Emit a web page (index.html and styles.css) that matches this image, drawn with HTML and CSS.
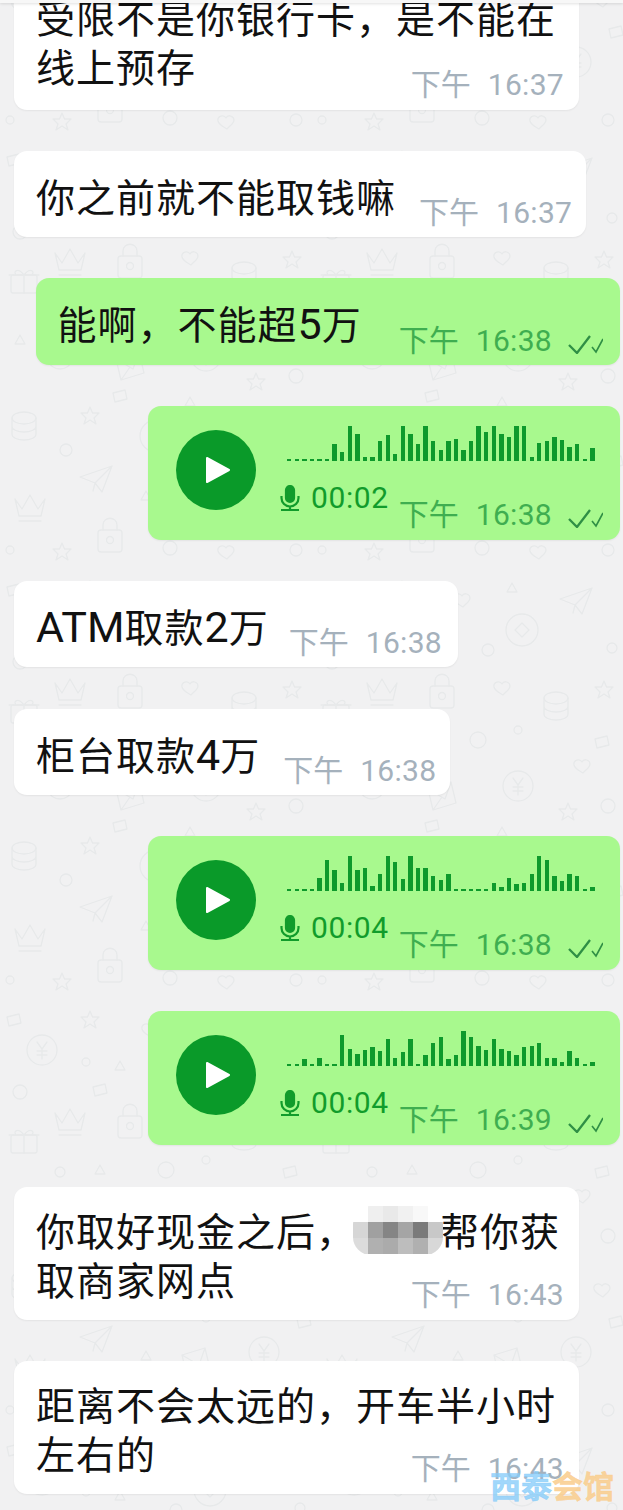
FILE: index.html
```html
<!DOCTYPE html>
<html lang="zh-CN">
<head>
  <meta charset="UTF-8">
  <meta name="viewport" content="width=device-width, initial-scale=1.0">
  <title>聊天记录</title>
  <link rel="stylesheet" href="styles.css">
</head>
<body>
  <div class="chat">
    <!-- background doodles -->
    <svg class="doodles" width="623" height="1510" aria-hidden="true">
      <defs>
        <path id="heart" d="M0 -4C-2 -8 -9 -6 -8 -1C-7 3 -2 5 1 7C3 4 8 2 8 -2C8 -6 2 -8 0 -4Z"/>
        <path id="star" d="M0 -9L2.5 -3L9 -3L4 2L6 8L0 4L-6 8L-4 2L-9 -3L-2.5 -3Z"/>
        <path id="tri" d="M0 -5L5 4L-5 4Z"/>
        <path id="chip" d="M-7 -3L5 -6L7 3L-5 6Z"/>
        <g id="coin"><circle r="15"/><path d="M-5 -8L0 -1L5 -8M0 -1V9M-5 1H5M-5 5H5"/></g>
        <g id="ring"><circle r="16"/><path d="M0 -7L7 0L0 7L-7 0Z"/></g>
        <g id="crown"><path d="M-15 -7L-8 3L0 -11L8 3L15 -7L11 10H-11ZM-11 15H11"/></g>
        <g id="lock"><rect x="-12" y="-6" width="24" height="22" rx="3"/><path d="M-7 -6V-11C-7 -20 7 -20 7 -11V-6"/><circle cy="4" r="3.5"/></g>
        <g id="gift"><rect x="-13" y="-5" width="26" height="18" rx="2"/><path d="M-15 -5H15M0 -5V13M0 -5C-7 -14 -12 -7 -7 -5M0 -5C7 -14 12 -7 7 -5"/></g>
        <g id="mail"><path d="M-14 -7L9 -14L14 7L-9 14ZM-14 -7L3 3L9 -14M-9 14L0 1"/></g>
        <g id="plane"><path d="M-16 -3L16 -14L6 12L-1 3ZM-1 3L16 -14M-1 3L-3 11"/></g>
        <g id="stack"><ellipse cy="-8" rx="12" ry="6"/><path d="M-12 -8V8C-12 16 12 16 12 8V-8M-12 0C-12 8 12 8 12 0"/></g>
        <g id="bag"><path d="M-5 -14L5 -14L3 -8C19 0 12 15 0 15C-12 15 -19 0 -3 -8Z"/><path d="M-4 -2L0 2L4 -2M0 2V10M-4 5H4"/></g>
      </defs>
      <pattern id="tile" width="312" height="430" patternUnits="userSpaceOnUse" x="0" y="140">
        <g fill="none" stroke="#e7e9ea" stroke-width="1.3" stroke-linejoin="round" stroke-linecap="round">
          <use href="#coin" x="42" y="50"/>
          <use href="#star" x="90" y="20"/>
          <use href="#heart" x="150" y="30"/>
          <use href="#ring" x="210" y="60"/>
          <use href="#plane" x="264" y="32"/>
          <use href="#tri" x="120" y="66"/>
          <use href="#chip" x="14" y="20"/>
          <use href="#tri" x="200" y="18"/>
          <circle cx="20" cy="92" r="7"/>
          <circle cx="176" cy="80" r="6"/>
          <circle cx="300" cy="78" r="5"/>
          <circle cx="86" cy="62" r="4"/>
          <use href="#crown" x="70" y="120"/>
          <use href="#lock" x="130" y="122"/>
          <use href="#gift" x="24" y="140"/>
          <use href="#heart" x="190" y="118"/>
          <use href="#stack" x="244" y="136"/>
          <use href="#star" x="292" y="120"/>
          <use href="#chip" x="100" y="90"/>
          <use href="#tri" x="100" y="170"/>
          <circle cx="166" cy="170" r="8"/>
          <circle cx="206" cy="160" r="4"/>
          <circle cx="60" cy="172" r="5"/>
          <use href="#chip" x="290" y="172"/>
          <use href="#bag" x="60" y="214"/>
          <use href="#mail" x="130" y="226"/>
          <use href="#coin" x="206" y="216"/>
          <use href="#heart" x="270" y="196"/>
          <circle cx="296" cy="236" r="7"/>
          <use href="#tri" x="20" y="200"/>
          <use href="#star" x="256" y="242"/>
          <use href="#stack" x="24" y="286"/>
          <use href="#star" x="90" y="276"/>
          <use href="#ring" x="156" y="296"/>
          <use href="#gift" x="232" y="282"/>
          <use href="#heart" x="290" y="290"/>
          <use href="#tri" x="190" y="262"/>
          <use href="#chip" x="120" y="256"/>
          <circle cx="66" cy="310" r="6"/>
          <circle cx="206" cy="318" r="4"/>
          <use href="#plane" x="96" y="340"/>
          <use href="#coin" x="264" y="352"/>
          <use href="#crown" x="30" y="366"/>
          <use href="#mail" x="196" y="362"/>
          <use href="#tri" x="146" y="356"/>
          <use href="#chip" x="304" y="322"/>
          <use href="#lock" x="110" y="396"/>
          <circle cx="170" cy="408" r="7"/>
          <use href="#heart" x="226" y="412"/>
          <use href="#star" x="62" y="412"/>
          <circle cx="296" cy="410" r="6"/>
          <circle cx="10" cy="410" r="4"/>
        </g>
      </pattern>
      <rect width="623" height="1510" fill="url(#tile)"/>
    </svg>

    <div class="topbar"></div>

    <div class="messages">
      <div class="bubble in wrap first">
        <div class="text">受限不是你银行卡，是不能在<br>线上预存</div>
        <div class="meta"><span>下午</span><span class="clock">16:37</span></div>
      </div>

      <div class="bubble in">
        <div class="text">你之前就不能取钱嘛</div>
        <div class="meta"><span>下午</span><span class="clock">16:37</span></div>
      </div>

      <div class="bubble out">
        <div class="text">能啊，不能超<span class="latin">5</span>万</div>
        <div class="meta"><span>下午</span><span class="clock">16:38</span>
          <svg class="ticks" viewBox="0 0 35 20"><path class="tick-big" d="M1 11L9 19L22 2"/><path d="M24 13L28 18L35 5"/></svg>
        </div>
      </div>

      <div class="bubble out voice">
        <div class="play"><svg viewBox="0 0 26 28"><path d="M2 2L24 14L2 26Z"/></svg></div>
        <div class="voice-body">
          <div class="wave" data-bars="2 2 2 2 2 2 17 9 35 27 4 4 20 26 7 35 27 17 35 20 11 20 22 11 20 35 29 35 27 24 35 35 4 18 20 24 21 14 17 2 13"></div>
          <div class="voice-row">
            <div class="duration">
              <svg class="mic" viewBox="0 0 20 26"><path class="mic-head" d="M6 5a4 4 0 0 1 8 0v8a4 4 0 0 1-8 0Z"/><path d="M1.5 11v2a8.5 8.5 0 0 0 17 0v-2M10 21.5V24M1 25h18"/></svg>
              <span>00:02</span>
            </div>
            <div class="meta"><span>下午</span><span class="clock">16:38</span>
              <svg class="ticks" viewBox="0 0 35 20"><path class="tick-big" d="M1 11L9 19L22 2"/><path d="M24 13L28 18L35 5"/></svg>
            </div>
          </div>
        </div>
      </div>

      <div class="bubble in atm">
        <div class="text"><span class="latin">ATM</span>取款<span class="latin">2</span>万</div>
        <div class="meta"><span>下午</span><span class="clock">16:38</span></div>
      </div>

      <div class="bubble in gap-wide">
        <div class="text">柜台取款<span class="latin">4</span>万</div>
        <div class="meta"><span>下午</span><span class="clock">16:38</span></div>
      </div>

      <div class="bubble out voice">
        <div class="play"><svg viewBox="0 0 26 28"><path d="M2 2L24 14L2 26Z"/></svg></div>
        <div class="voice-body">
          <div class="wave" data-bars="2 2 2 2 13 31 21 8 35 21 23 5 17 35 29 12 35 23 23 15 11 17 2 2 2 2 2 8 4 13 7 8 17 35 31 15 10 17 15 2 4"></div>
          <div class="voice-row">
            <div class="duration">
              <svg class="mic" viewBox="0 0 20 26"><path class="mic-head" d="M6 5a4 4 0 0 1 8 0v8a4 4 0 0 1-8 0Z"/><path d="M1.5 11v2a8.5 8.5 0 0 0 17 0v-2M10 21.5V24M1 25h18"/></svg>
              <span>00:04</span>
            </div>
            <div class="meta"><span>下午</span><span class="clock">16:38</span>
              <svg class="ticks" viewBox="0 0 35 20"><path class="tick-big" d="M1 11L9 19L22 2"/><path d="M24 13L28 18L35 5"/></svg>
            </div>
          </div>
        </div>
      </div>

      <div class="bubble out voice">
        <div class="play"><svg viewBox="0 0 26 28"><path d="M2 2L24 14L2 26Z"/></svg></div>
        <div class="voice-body">
          <div class="wave" data-bars="2 2 7 2 8 2 2 31 17 12 16 19 15 27 8 14 27 2 11 23 29 7 11 35 29 20 16 27 17 15 11 19 20 23 8 8 4 15 8 2 4"></div>
          <div class="voice-row">
            <div class="duration">
              <svg class="mic" viewBox="0 0 20 26"><path class="mic-head" d="M6 5a4 4 0 0 1 8 0v8a4 4 0 0 1-8 0Z"/><path d="M1.5 11v2a8.5 8.5 0 0 0 17 0v-2M10 21.5V24M1 25h18"/></svg>
              <span>00:04</span>
            </div>
            <div class="meta"><span>下午</span><span class="clock">16:39</span>
              <svg class="ticks" viewBox="0 0 35 20"><path class="tick-big" d="M1 11L9 19L22 2"/><path d="M24 13L28 18L35 5"/></svg>
            </div>
          </div>
        </div>
      </div>

      <div class="bubble in wrap gap-wide">
        <div class="text tight">你取好现金之后，<span class="mosaic" id="mosaic"></span>帮你获<br>取商家网点</div>
        <div class="meta"><span>下午</span><span class="clock">16:43</span></div>
      </div>

      <div class="bubble in wrap">
        <div class="text">距离不会太远的，开车半小时<br>左右的</div>
        <div class="meta"><span>下午</span><span class="clock">16:43</span></div>
      </div>
    </div>

    <div class="watermark"><span class="wm-blue">西泰</span><span class="wm-orange">会馆</span></div>
  </div>

  <script>
    // voice message bars
    document.querySelectorAll(".wave").forEach(wave => {
      wave.dataset.bars.split(" ").forEach(h => {
        const bar = document.createElement("span");
        bar.style.height = h + "px";
        wave.appendChild(bar);
      });
    });

    // the pixelated name
    const cells = [
      "#fff", "#efefef", "#e9e9e9", "#f1f1f1", "#f8f8f8", "#fff",
      "#d6d6d6", "#a0a0a0", "#858585", "#a5a5a5", "#7a7a7a", "#c8c8c8",
      "#dcdcdc", "#b0b0b0", "#ababab", "#bdbdbd", "#b0b0b0", "#d8d8d8"
    ];
    const mosaic = document.getElementById("mosaic");
    cells.forEach(c => {
      const cell = document.createElement("i");
      cell.style.background = c;
      mosaic.appendChild(cell);
    });
  </script>
</body>
</html>
```

FILE: styles.css
```css
html, body {
  margin: 0;
  padding: 0;
}
body {
  font-family: Roboto, "Noto Sans CJK SC", sans-serif;
  background-color: #f1f1f2;
  color: #111;
}
.chat {
  position: relative;
  width: 623px;
  height: 1510px;
  overflow: hidden;
}
.doodles {
  position: absolute;
  top: 0;
  left: 0;
}
.topbar {
  position: absolute;
  top: 0;
  left: 0;
  right: 0;
  height: 3px;
  background-color: #f7f7f7;
  box-shadow: 0 1px 3px rgba(0, 0, 0, 0.12);
  z-index: 2;
}
.messages {
  position: relative;
  display: flex;
  flex-direction: column;
  align-items: flex-start;
  gap: 41px;
  margin-top: -26px;
  padding: 0 3px 0 14px;
}
.bubble {
  display: flex;
  align-items: flex-start;
  gap: 23px;
  padding: 23px 14px 9px 22px;
  border-radius: 13px;
  background-color: #fff;
  box-shadow: 0 1px 2px rgba(0, 0, 0, 0.06);
}
.gap-wide {
  margin-top: 1px;
}
.bubble.atm {
  padding-right: 16px;
}
.bubble.atm .text {
  margin-right: -3px;
}
.bubble.out {
  align-self: flex-end;
  gap: 37px;
  background-color: #a8f98e;
  padding-right: 17px;
}
.bubble.wrap {
  flex-direction: column;
  gap: 0;
  padding: 22px 23px 10px 22px;
}
.bubble.wrap .meta {
  align-self: flex-end;
  margin-top: -27px;
  margin-right: -8px;
}
.bubble.first {
  padding-bottom: 10px;
}
.bubble.wrap.first .meta {
  margin-top: -24px;
}
.text {
  font-size: 39px;
  letter-spacing: 1px;
  line-height: 49px;
  white-space: nowrap;
}
.bubble:not(.wrap) .text {
  line-height: 50px;
}
.tight {
  margin-right: -4px;
}
.latin {
  font-size: 43px;
  line-height: 1;
  letter-spacing: 0;
}
.meta {
  display: flex;
  align-items: center;
  gap: 17px;
  margin-top: 24px;
  height: 30px;
  font-size: 30px;
  line-height: 30px;
  color: #a5b1bc;
  white-space: nowrap;
}
.clock {
  letter-spacing: 0.3px;
}
.out .meta {
  color: #3fae50;
  margin-top: 25px;
}
.ticks {
  width: 35px;
  height: 20px;
  margin-left: -1px;
  margin-top: 6px;
  fill: none;
  stroke: #2f8f45;
  stroke-width: 1.6;
}
.tick-big {
  stroke-width: 2.3;
}

/* voice messages */
.bubble.voice {
  gap: 31px;
  padding: 24px 17px 10px 28px;
}
.play {
  width: 80px;
  height: 80px;
  border-radius: 50%;
  background-color: #0a9a29;
  display: flex;
  justify-content: center;
  align-items: center;
}
.play svg {
  width: 26px;
  height: 28px;
  margin-left: 4px;
  fill: #fff;
  stroke: #fff;
  stroke-width: 2;
  stroke-linejoin: round;
}
.voice-body {
  width: 316px;
}
.wave {
  display: flex;
  align-items: flex-end;
  gap: 3.2px;
  height: 35px;
  margin-top: -4px;
}
.wave span {
  width: 4.4px;
  background-color: #0e9a2c;
}
.voice-row {
  display: flex;
  justify-content: space-between;
  align-items: flex-start;
  margin-top: 22px;
  margin-left: -7px;
}
.voice-row .meta {
  margin-top: 17px;
}
.duration {
  display: flex;
  align-items: center;
  gap: 11px;
  height: 30px;
  font-size: 30px;
  letter-spacing: 0.6px;
  line-height: 30px;
  color: #119c2b;
}
.mic {
  width: 20px;
  height: 26px;
  fill: none;
  stroke: #119c2b;
  stroke-width: 2.2;
}
.mic-head {
  fill: #119c2b;
}

/* blurred name */
.mosaic {
  display: inline-grid;
  grid-template-columns: repeat(6, 15px);
  grid-auto-rows: 16px;
  vertical-align: top;
  margin: -3px -3px 0 -3px;
  height: 49px;
  border-radius: 18px;
  overflow: hidden;
  filter: blur(0.5px);
}

/* site mark in the corner */
.watermark {
  position: absolute;
  right: 9px;
  bottom: 6px;
  font-size: 31px;
  line-height: 32px;
  font-weight: 700;
  -webkit-text-stroke: 0.5px currentColor;
  z-index: 3;
}
.wm-blue {
  color: rgba(135, 205, 250, 0.8);
}
.wm-orange {
  color: rgba(250, 205, 140, 0.85);
}
```
